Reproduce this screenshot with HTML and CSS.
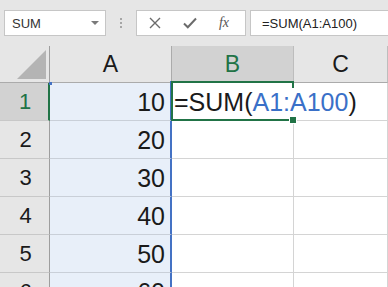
FILE: index.html
```html
<!DOCTYPE html>
<html lang="en">
<head>
    <meta charset="UTF-8">
    <meta name="viewport" content="width=device-width, initial-scale=1.0">
    <title>Sheet</title>
    <link rel="stylesheet" href="styles.css">
</head>

<body>
    <header class="toolbar">
        <div class="name-box">
            <span class="name-text">SUM</span>
            <span class="caret"></span>
        </div>
        <div class="grip">
            <span></span><span></span><span></span>
        </div>
        <div class="fx-buttons">
            <svg class="icon" width="12" height="12" viewBox="0 0 12 12">
                <path d="M1 1 L11 11 M11 1 L1 11" stroke="#6b6b6b" stroke-width="1.4" fill="none"/>
            </svg>
            <svg class="icon" width="14" height="12" viewBox="0 0 14 12">
                <path d="M1 6.5 L4.8 10.2 L13 1.5" stroke="#6b6b6b" stroke-width="2" fill="none"/>
            </svg>
            <span class="fx">fx</span>
        </div>
        <div class="formula-input">=SUM(A1:A100)</div>
    </header>

    <main class="sheet">
        <div class="corner"><span class="corner-triangle"></span></div>
        <div class="col-head">A</div>
        <div class="col-head active">B</div>
        <div class="col-head">C</div>

        <div class="row-head active">1</div>
        <div class="cell range first">10</div>
        <div class="cell current"><span class="cell-text">=SUM(<span class="ref">A1:A100</span>)</span></div>
        <div class="cell spill"></div>

        <div class="row-head">2</div>
        <div class="cell range">20</div>
        <div class="cell"></div>
        <div class="cell"></div>

        <div class="row-head">3</div>
        <div class="cell range">30</div>
        <div class="cell"></div>
        <div class="cell"></div>

        <div class="row-head">4</div>
        <div class="cell range">40</div>
        <div class="cell"></div>
        <div class="cell"></div>

        <div class="row-head">5</div>
        <div class="cell range">50</div>
        <div class="cell"></div>
        <div class="cell"></div>

        <div class="row-head">6</div>
        <div class="cell range">60</div>
        <div class="cell"></div>
        <div class="cell"></div>
    </main>
</body>
</html>
```

FILE: styles.css
```css
:root {
    --color-bar: #e6e6e6;
    --color-head: #e6e6e6;
    --color-head-active: #d2d2d2;
    --color-green: #217346;
    --color-blue: #4472c4;
    --color-ref: #3a70c8;
    --color-range: #e8eff9;
    --color-grid: #d4d4d4;
    --color-head-line: #ababab;
    --color-text: #1a1a1a;
}

* {
    margin: 0;
    padding: 0;
    box-sizing: border-box;
}

body {
    width: 388px;
    height: 287px;
    overflow: hidden;
    background-color: #ffffff;
    font-family: "Liberation Sans", Arial, sans-serif;
    color: var(--color-text);
}

/* barra de fórmulas */
.toolbar {
    height: 46px;
    display: flex;
    align-items: flex-start;
    padding: 10px 0 0 4px;
    background-color: var(--color-bar);
}

.name-box,
.fx-buttons,
.formula-input {
    height: 26px;
    background-color: #ffffff;
    border: 1px solid #c6c6c6;
    display: flex;
    align-items: center;
    font-size: 13px;
}

.name-box {
    width: 102px;
    padding: 0 6px 0 7px;
    justify-content: space-between;
    color: #333333;
}

.caret {
    width: 0;
    height: 0;
    border-left: 4px solid transparent;
    border-right: 4px solid transparent;
    border-top: 4px solid #7a7a7a;
}

.grip {
    width: 30px;
    height: 26px;
    display: flex;
    flex-direction: column;
    align-items: center;
    justify-content: center;
    gap: 2px;
}

.grip span {
    width: 2px;
    height: 2px;
    background-color: #a6a6a6;
}

.fx-buttons {
    width: 110px;
    padding: 0 12px 0 12px;
    justify-content: space-between;
}

.fx {
    font-family: "Liberation Serif", "Times New Roman", serif;
    font-style: italic;
    font-size: 14px;
    color: #555555;
    padding-right: 4px;
}

.formula-input {
    flex: 1;
    margin-left: 4px;
    padding-left: 11px;
    border-right: none;
    color: #222222;
}

/* planilha */
.sheet {
    display: grid;
    grid-template-columns: 50px 122px 122px 1fr;
    grid-template-rows: 37px repeat(6, 38px);
}

.corner {
    background-color: var(--color-head);
    border-right: 1px solid #9e9e9e;
    border-bottom: 1px solid var(--color-head-line);
    display: flex;
    justify-content: flex-end;
    align-items: flex-end;
    padding: 0 3px 3px 0;
}

.corner-triangle {
    width: 29px;
    height: 29px;
    background-color: #b4b4b4;
    clip-path: polygon(100% 0, 100% 100%, 0 100%);
}

.col-head {
    background-color: var(--color-head);
    border-right: 1px solid #bdbdbd;
    border-bottom: 1px solid var(--color-head-line);
    display: flex;
    align-items: center;
    justify-content: center;
    font-size: 23px;
    padding-top: 1px;
}

.col-head.active {
    background-color: var(--color-head-active);
    color: var(--color-green);
    border-left: 1px solid #ababab;
    margin-left: -1px;
    border-bottom: 2px solid var(--color-green);
}

.row-head {
    background-color: var(--color-head);
    border-right: 1px solid #9e9e9e;
    border-bottom: 1px solid #c8c8c8;
    display: flex;
    align-items: center;
    justify-content: center;
    font-size: 22px;
    padding-left: 2px;
}

.row-head.active {
    background-color: var(--color-head-active);
    color: var(--color-green);
    border-right: 2px solid var(--color-green);
}

.cell {
    border-right: 1px solid var(--color-grid);
    border-bottom: 1px solid var(--color-grid);
    display: flex;
    align-items: center;
    font-size: 25px;
    white-space: nowrap;
    padding-top: 1px;
}

.cell.range {
    background-color: var(--color-range);
    justify-content: flex-end;
    padding-right: 5px;
    border-right: 2px solid var(--color-blue);
    border-bottom-color: #c9cfd8;
}

.cell.range.first {
    position: relative;
}

/* marcadores do intervalo */
.cell.range.first::before,
.cell.range.first::after {
    content: "";
    position: absolute;
    width: 3px;
    height: 3px;
    background-color: var(--color-blue);
}

.cell.range.first::before {
    top: -1px;
    left: -1px;
}

.cell.range.first::after {
    top: -2px;
    right: -3px;
}

.cell.spill {
    border-right-color: var(--color-grid);
}

.cell.current {
    position: relative;
    padding-left: 2px;
    z-index: 1;
}

/* borda da célula ativa, abaixo do texto */
.cell.current::before {
    content: "";
    position: absolute;
    top: -2px;
    left: -1px;
    right: -1px;
    bottom: -1px;
    border: 2px solid var(--color-green);
}

.cell.current::after {
    content: "";
    position: absolute;
    right: -4px;
    bottom: -4px;
    width: 6px;
    height: 6px;
    background-color: var(--color-green);
    border: 1px solid #ffffff;
}

.cell-text {
    position: relative;
    z-index: 1;
    background-color: #ffffff;
}

.ref {
    color: var(--color-ref);
}
```
